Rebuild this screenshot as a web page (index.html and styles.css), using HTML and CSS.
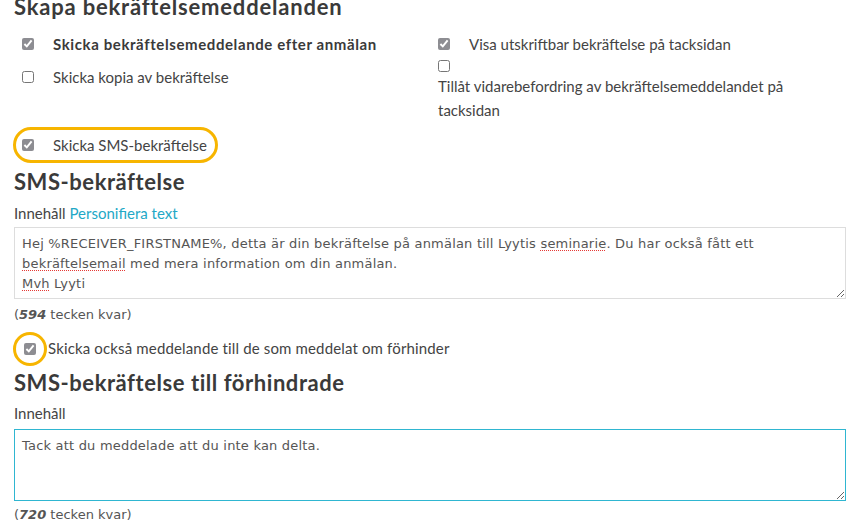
FILE: index.html
```html
<!DOCTYPE html>
<html lang="sv">
<head>
<meta charset="utf-8">
<title>Bekräftelsemeddelanden</title>
<link rel="stylesheet" href="styles.css">
</head>
<body>
<div class="page">
  <h1 class="title">Skapa bekräftelsemeddelanden</h1>
  <div class="cols">
    <div class="col">
      <label class="opt"><input type="checkbox" class="cb" checked><span class="opt-text strong">Skicka bekräftelsemeddelande efter anmälan</span></label>
      <label class="opt"><input type="checkbox" class="cb"><span class="opt-text">Skicka kopia av bekräftelse</span></label>
    </div>
    <div class="col">
      <label class="opt opt-first"><input type="checkbox" class="cb" checked><span class="opt-text">Visa utskriftbar bekräftelse på tacksidan</span></label>
      <label class="opt-stack"><input type="checkbox" class="cb cb-block"><span class="stack-text">Tillåt vidarebefordring av bekräftelsemeddelandet på tacksidan</span></label>
    </div>
  </div>

  <label class="highlight"><input type="checkbox" class="cb" checked><span class="opt-text">Skicka SMS-bekräftelse</span></label>

  <h2 class="section">SMS-bekräftelse</h2>
  <div class="field-label">Innehåll <a class="link" href="#">Personifiera text</a></div>
  <div class="textbox" role="textbox">Hej %RECEIVER_FIRSTNAME%, detta är din bekräftelse på anmälan till Lyytis <span class="spell">seminarie</span>. Du har också fått ett<br><span class="spell">bekräftelsemail</span> med mera information om din anmälan.<br><span class="spell">Mvh</span> Lyyti</div>
  <div class="count">(<b><i>594</i></b> tecken kvar)</div>

  <label class="circle-row"><span class="circle"><input type="checkbox" class="cb" checked></span><span class="circle-text">Skicka också meddelande till de som meddelat om förhinder</span></label>

  <h2 class="section section-2">SMS-bekräftelse till förhindrade</h2>
  <div class="field-label field-label-2">Innehåll</div>
  <div class="textbox textbox-focus" role="textbox">Tack att du meddelade att du inte kan delta.</div>
  <div class="count count-2">(<b><i>720</i></b> tecken kvar)</div>
</div>
</body>
</html>
```
FILE: styles.css
```css
html, body {
  margin: 0;
  padding: 0;
  background: #fff;
}
body {
  font-family: "Lato", "Open Sans", sans-serif;
  color: #444;
  overflow: hidden;
}
.page {
  padding: 0 10px 0 14px;
  margin-top: -7px;
}
.title, .section {
  font-family: "Lato", sans-serif;
  font-weight: 700;
  font-size: 22px;
  line-height: 28px;
  letter-spacing: 0.55px;
  color: #3a3a3a;
  margin: 0;
}
.title {
  letter-spacing: 0.8px;
}
.cols {
  display: grid;
  grid-template-columns: 1fr 1fr;
  margin-top: 12px;
}
.col {
  display: flex;
  flex-direction: column;
  padding-left: 8px;
}
.opt {
  display: flex;
  align-items: center;
  height: 22px;
  margin-bottom: 11px;
  font-size: 15px;
}
.opt-first {
  margin-bottom: 5px;
}
.cb {
  width: 12px;
  height: 12px;
  margin: 0;
  accent-color: #8d8d92;
  flex: none;
}
.opt-text {
  margin-left: 19px;
}
.strong {
  font-weight: 700;
  color: #3a3a3a;
  letter-spacing: 0.6px;
}
.opt-stack {
  display: block;
  font-size: 15px;
}
.cb-block {
  display: block;
}
.stack-text {
  display: block;
  margin-top: 2px;
  line-height: 24px;
  padding-right: 30px;
}
.highlight {
  display: inline-flex;
  align-items: center;
  height: 30px;
  border: 3px solid #f7b500;
  border-radius: 18px;
  padding: 0 8px 0 6px;
  margin: 5px 0 0 -1px;
  font-size: 15px;
}
.highlight .opt-text {
  margin-left: 19px;
}
.section {
  margin-top: 5px;
}
.field-label {
  font-size: 15px;
  line-height: 20px;
  margin-top: 7px;
}
.link {
  color: #23a8c6;
  text-decoration: none;
}
.textbox {
  font-family: "DejaVu Sans", Verdana, sans-serif;
  font-size: 13px;
  letter-spacing: 0.2px;
  line-height: 20px;
  color: #555;
  border: 1px solid #ddd;
  height: 58px;
  padding: 6px 7px;
  margin-top: 4px;
  resize: vertical;
  overflow: auto;
}
.spell {
  text-decoration: underline dotted #e53935;
  text-decoration-thickness: 1px;
  text-underline-offset: 2px;
}
.textbox-focus {
  border-color: #2fb6d1;
  margin-top: 6px;
}
.count {
  font-family: "DejaVu Sans", Verdana, sans-serif;
  font-size: 13px;
  line-height: 18px;
  color: #555;
  margin-top: 7px;
}
.count b {
  color: #555;
}
.count-2 {
  margin-top: 5px;
}
.circle-row {
  display: flex;
  align-items: center;
  margin: 8px 0 0 -1px;
  font-size: 15px;
}
.circle {
  width: 28px;
  height: 28px;
  border: 3px solid #f7b500;
  border-radius: 50%;
  display: flex;
  align-items: center;
  justify-content: center;
  flex: none;
}
.circle-text {
  margin-left: 1px;
  letter-spacing: 0.15px;
  position: relative;
  top: -1px;
}
.section-2 {
  margin-top: 3px;
}
.field-label-2 {
  margin-top: 6px;
}
```
